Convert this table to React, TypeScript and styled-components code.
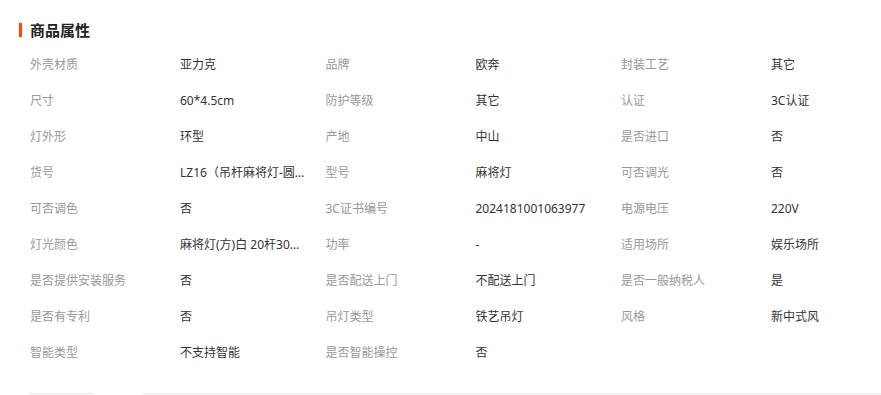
import styled, {createGlobalStyle} from "styled-components"

const GlobalStyle = createGlobalStyle`
  html, body {
    margin: 0;
    padding: 0;
    background: #fff;
  }
  body {
    font-family: "Noto Sans", "Noto Sans CJK SC", sans-serif;
    color: #333;
  }
`

const labelWidth = 150
const valueWidth = 145.5
const rowHeight = 36

const Section = styled.section`
  padding: 20px 0 0 30px;
  width: ${(labelWidth + valueWidth) * 3}px;
`

const Title = styled.h3`
  position: relative;
  margin: 0;
  height: 20px;
  line-height: 20px;
  font-size: 15px;
  font-weight: bold;
  color: #222;

  &::before {
    content: "";
    position: absolute;
    left: -11px;
    top: 3px;
    width: 3px;
    height: 14px;
    background: #ff4400;
  }
`

const Grid = styled.dl`
  margin: 6px 0 0;
  display: grid;
  grid-template-columns: repeat(3, ${labelWidth}px ${valueWidth}px);
  grid-auto-rows: ${rowHeight}px;
  align-items: center;
  font-size: 12px;
`

const Label = styled.dt`
  margin: 0;
  color: #999;
  white-space: nowrap;
`

const Value = styled.dd`
  margin: 0;
  padding-right: 16px;
  color: #333;
  white-space: nowrap;
  overflow: hidden;
  text-overflow: ellipsis;
`

const Footer = styled.div`
  display: flex;
  gap: 50px;
  margin-top: 23px;
  padding-left: 30px;
`

const FooterLine = styled.div<{$width?: number}>`
  height: 1px;
  background: #e6e6e6;
  width: ${props => (props.$width ? `${props.$width}px` : "auto")};
  flex: ${props => (props.$width ? "none" : "1")};
`

const props: [string, string][] = [
  ["外壳材质", "亚力克"],
  ["品牌", "欧奔"],
  ["封装工艺", "其它"],
  ["尺寸", "60*4.5cm"],
  ["防护等级", "其它"],
  ["认证", "3C认证"],
  ["灯外形", "环型"],
  ["产地", "中山"],
  ["是否进口", "否"],
  ["货号", "LZ16（吊杆麻将灯-圆形）"],
  ["型号", "麻将灯"],
  ["可否调光", "否"],
  ["可否调色", "否"],
  ["3C证书编号", "2024181001063977"],
  ["电源电压", "220V"],
  ["灯光颜色", "麻将灯(方)白 20杆30W 黑框"],
  ["功率", "-"],
  ["适用场所", "娱乐场所"],
  ["是否提供安装服务", "否"],
  ["是否配送上门", "不配送上门"],
  ["是否一般纳税人", "是"],
  ["是否有专利", "否"],
  ["吊灯类型", "铁艺吊灯"],
  ["风格", "新中式风"],
  ["智能类型", "不支持智能"],
  ["是否智能操控", "否"]
]

export default function App() {
  return (
    <>
      <GlobalStyle />
      <Section>
        <Title>商品属性</Title>
        <Grid>
          {props.map(([label, value]) => (
            <>
              <Label key={`l-${label}`}>{label}</Label>
              <Value key={`v-${label}`} title={value}>
                {value}
              </Value>
            </>
          ))}
        </Grid>
      </Section>
      <Footer>
        <FooterLine $width={63} />
        <FooterLine />
      </Footer>
    </>
  )
}
